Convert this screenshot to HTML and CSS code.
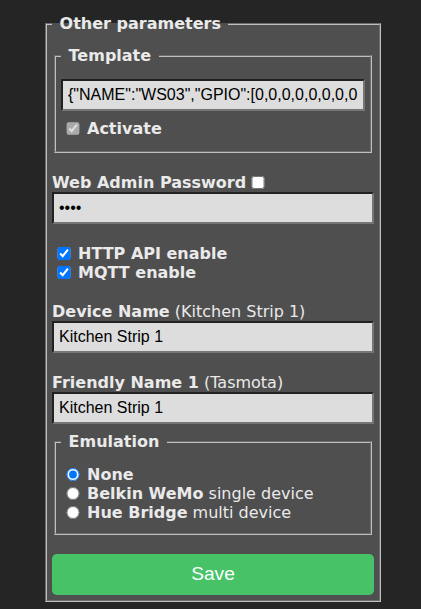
FILE: index.html
```html
<!DOCTYPE html>
<html lang="en">
<head>
  <meta charset="UTF-8">
  <title>Tasmota - Other parameters</title>
  <link rel="stylesheet" href="styles.css">
</head>
<body>
  <div class="contenedor">
    <fieldset class="marco">
      <legend><b>&nbsp;Other parameters&nbsp;</b></legend>
      <form id="formulario">
        <p></p>
        <fieldset class="marco">
          <legend><b>&nbsp;Template&nbsp;</b></legend>
          <p><input class="campo" id="t1" value='{"NAME":"WS03","GPIO":[0,0,0,0,0,0,0,0,0,0,0,0,0,0],"FLAG":0,"BASE":18}'></p>
          <p><label><input class="marca" type="checkbox" checked disabled><b>Activate</b></label></p>
        </fieldset>
        <br>
        <label><b>Web Admin Password</b><input class="marca marca-pass" type="checkbox"></label><br>
        <input class="campo" id="wp" type="password" value="****"><br>
        <br>
        <label><input class="marca" type="checkbox" checked><b>HTTP API enable</b></label><br>
        <label><input class="marca" type="checkbox" checked><b>MQTT enable</b></label><br>
        <br>
        <label><b>Device Name</b> (Kitchen Strip 1)</label><br>
        <input class="campo" id="dn" value="Kitchen Strip 1"><br>
        <br>
        <label><b>Friendly Name 1</b> (Tasmota)</label><br>
        <input class="campo" id="a0" value="Kitchen Strip 1">
        <p></p>
        <fieldset class="marco">
          <legend><b>&nbsp;Emulation&nbsp;</b></legend>
          <p class="opciones">
            <label><input class="marca" name="emu" type="radio" checked><b>None</b></label><br>
            <label><input class="marca" name="emu" type="radio"><b>Belkin WeMo</b> single device</label><br>
            <label><input class="marca" name="emu" type="radio"><b>Hue Bridge</b> multi device</label>
          </p>
        </fieldset>
        <br>
        <button type="submit" class="boton">Save</button>
      </form>
    </fieldset>
  </div>
</body>
</html>
```

FILE: styles.css
```css
body { margin: 8px; padding: 6px 0 0 5px; text-align: center; font-family: "DejaVu Sans", Verdana, sans-serif; font-size: 16px; line-height: 1.215; background: #252525; }
.contenedor { display: inline-block; min-width: 340px; text-align: left; color: #eaeaea; }
.marco { margin: 0 2px; padding: 5px; background: #4f4f4f; border: 2px groove #c0c0c0; }
p { margin: 0.5em 0; }
.opciones { line-height: 19px; margin-bottom: 6px; }
.campo { width: 100%; box-sizing: border-box; padding: 5px; font: 16px "Liberation Sans", Arial, sans-serif; background: #dddddd; color: #000; }
.marca { width: 16px; margin: 3px 6px 3px 4px; vertical-align: -1px; }
.marca-pass { margin-right: 0; }
.boton { display: block; border: 0; border-radius: 0.3rem; background: #47c266; color: #faffff; font-family: "Liberation Sans", Arial, sans-serif; font-size: 1.2rem; line-height: 2.4rem; width: 100%; cursor: pointer; }
```
